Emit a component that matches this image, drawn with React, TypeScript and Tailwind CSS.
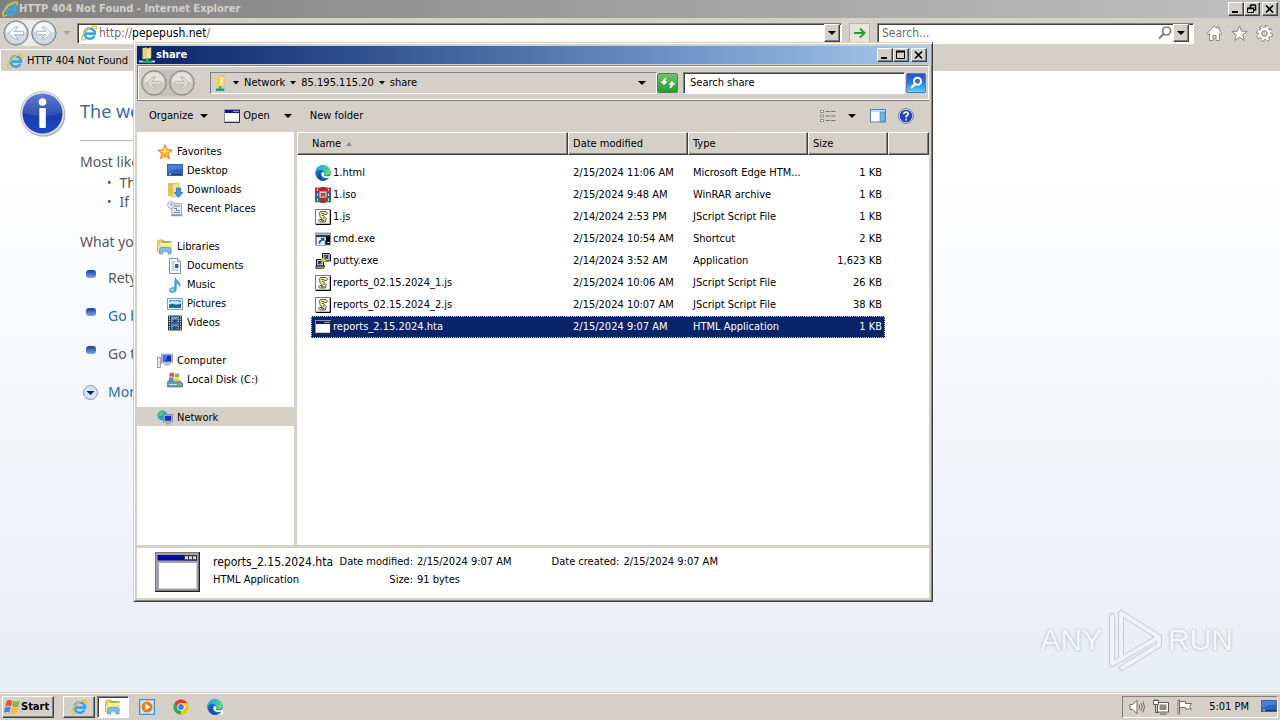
import type { ReactNode } from "react";

const RAISED =
  "border border-t-white border-l-white border-r-[#404040] border-b-[#404040] bg-[#d4d0c8] shadow-[inset_-1px_-1px_0_#808080]";
const SUNKEN =
  "border border-t-[#808080] border-l-[#808080] border-r-white border-b-white bg-white shadow-[inset_1px_1px_0_#404040]";

type IconProps = { className?: string };

/* ---------- icons ---------- */

function IeIcon({ className = "h-4 w-4" }: IconProps) {
  return (
    <svg className={`shrink-0 ${className}`} viewBox="0 0 16 16" aria-hidden>
      <path d="M13.4 10.8A5.200 5.200 0 1 1 13.900 8.600H4.600" fill="none" stroke="#3aa5e4" strokeWidth="2.600" />
      <path d="M4 6.200Q5.500 3.800 8.500 3.800" fill="none" stroke="#9bdcfa" strokeWidth="1" />
      <path
        d="M1.200 14.600C-.4 12.400 3 6.600 8.400 3.200 11.600 1.200 15 .4 15.400 2c.2.800-.1 1.800-.6 2.600"
        fill="none"
        stroke="#efc12c"
        strokeWidth="1.500"
      />
      <path d="M1.200 14.600c1 .8 2.600.2 4-.6" fill="none" stroke="#efc12c" strokeWidth="1.300" />
    </svg>
  );
}

function EdgeIcon({ className = "h-4 w-4" }: IconProps) {
  return (
    <svg className={`shrink-0 ${className}`} viewBox="0 0 16 16" aria-hidden>
      <defs>
        <linearGradient id="edgeTop" x1="0" y1="0" x2="1" y2="0.4">
          <stop offset="0" stopColor="#1f9fe0" />
          <stop offset="0.6" stopColor="#2fc3c0" />
          <stop offset="1" stopColor="#6bdc5a" />
        </linearGradient>
      </defs>
      <circle cx="8" cy="8" r="7.700" fill="#1668bd" />
      <path d="M.3 8C.6 3.400 4 .3 8 .3c4.500 0 7.700 3 7.700 6.500 0 2.200-1.800 3.700-4 3.700-1.700 0-2.700-.7-2.400-1.400.4-.8.500-2.800-1.800-3.700C4.800 4.400 1.200 5.500.3 8z" fill="url(#edgeTop)" />
      <path d="M5.200 9.200c-.2 3.200 2.500 6 5.800 6.100a7.500 7.500 0 0 1-5.700-.1C2.900 14 2.400 11 5.200 6.500z" fill="#1247a0" />
      <path d="M7.200 7.200c-1.400 1-1.300 4.800 2.800 5.700 2.500.5 4.200-.4 5-1l-1 2-1.200 1.300 3.200 0V10c-2 1.500-6.200 1.600-6.900.3-.3-.6.600-1.300.1-2.300-.4-.8-1.300-1.200-2-.8z" fill="#fff" />
    </svg>
  );
}

function ChromeIcon() {
  return (
    <svg className="h-4 w-4 shrink-0" viewBox="0 0 16 16" aria-hidden>
      <circle cx="8" cy="8" r="7.500" fill="#fbc116" />
      <path d="M1.500 4.200A7.500 7.500 0 0 1 14.500 4.300H8L4.800 9.800z" fill="#e33b2e" />
      <path d="M1.500 4.200 4.700 9.800 8 11.600l-.2 3.900A7.500 7.500 0 0 1 1.500 4.200z" fill="#2da94f" />
      <path d="M7.800 15.500 11.200 9.800 8 4.300h6.500A7.500 7.500 0 0 1 7.800 15.500z" fill="#fbc116" />
      <circle cx="8" cy="8" r="3.700" fill="#fff" />
      <circle cx="8" cy="8" r="2.900" fill="#3b7ded" />
    </svg>
  );
}

function MediaIcon() {
  return (
    <svg className="h-4 w-4 shrink-0" viewBox="0 0 16 16" aria-hidden>
      <rect x="0.5" y="0.5" width="15" height="15" fill="#a6cdf0" stroke="#4e8ec8" />
      <rect x="2" y="2" width="12" height="12" fill="#d8ecfb" />
      <circle cx="8" cy="8" r="5.500" fill="#f07c12" />
      <path d="M6.300 4.700v6.600L11.500 8z" fill="#fff" />
    </svg>
  );
}

function ExplorerIcon({ className = "h-4 w-4" }: IconProps) {
  return (
    <svg className={`shrink-0 ${className}`} viewBox="0 0 16 16" aria-hidden>
      <path d="M.5 2.500 2 1h4l1 1.500h7.500V13H.5z" fill="#f0cf62" stroke="#c99f3b" strokeWidth=".7" />
      <path d="M3 4h12v8H3z" fill="#fbeea7" />
      <path d="M5 3h7" stroke="#59b64b" strokeWidth="1.200" />
      <path d="M1 6.500h14V13H1z" fill="#f8e28a" />
      <path d="M2.500 15V10.500Q2.500 8.500 5 8.500h6.500q2.500 0 2.500 2V15h-3v-3H5.500v3z" fill="#7fc1ea" stroke="#4a8fc2" strokeWidth=".7" />
    </svg>
  );
}

function NetFolderIcon() {
  return (
    <svg className="h-4 w-4 shrink-0" viewBox="0 0 16 16" aria-hidden>
      <path d="M3.500 1 8 .5V12H3.500z" fill="#f3d470" />
      <path d="M7 2l5-1.500V11L7 12.500z" fill="#f9e79d" stroke="#d5a93d" strokeWidth=".6" />
      <path d="M7 11h2.500v4H7z" fill="#2fb673" />
      <path d="M4 13.500h8.500V16H4z" fill="#24a868" />
      <path d="M0 14.500h4M12.500 14.500H16" stroke="#a9dcf2" strokeWidth="2" />
    </svg>
  );
}

function StarIcon() {
  return (
    <svg className="h-4 w-4 shrink-0" viewBox="0 0 16 16" aria-hidden>
      <path d="M8 .8l2.100 4.800 5.200.5-3.900 3.500 1.100 5.200L8 12.200l-4.500 2.600 1.100-5.200L.7 6.100l5.200-.5z" fill="#fbb52f" stroke="#dd8424" strokeWidth=".9" />
      <path d="M8 2.700l1.300 3.700 3.700.4-3 1.200-4 .5-2.600-1.700 3.100-.4z" fill="#fee08a" />
    </svg>
  );
}

function DesktopIcon() {
  return (
    <svg className="h-4 w-4 shrink-0" viewBox="0 0 16 16" aria-hidden>
      <rect x="0.5" y="1.500" width="15" height="11" fill="#2a62bf" stroke="#47618f" />
      <path d="M1 2h14v4Q9 5 1 9z" fill="#4580d6" />
      <path d="M1 11.500h14" stroke="#17346e" />
      <path d="M2 10.500h2v1.500H2z" fill="#8fd6ff" />
    </svg>
  );
}

function DownloadsIcon() {
  return (
    <svg className="h-4 w-4 shrink-0" viewBox="0 0 16 16" aria-hidden>
      <path d="M1 1h5v13H1z" fill="#e5bf57" />
      <path d="M5 2l7-1v13l-7 1.500z" fill="#f8df8a" stroke="#cfa545" strokeWidth=".6" />
      <path d="M9.500 6h4v4.500h2.300L11.500 15.500 7.200 10.500h2.300z" fill="#3b9ae5" stroke="#1d68b4" strokeWidth=".7" />
    </svg>
  );
}

function RecentIcon() {
  return (
    <svg className="h-4 w-4 shrink-0" viewBox="0 0 16 16" aria-hidden>
      <path d="M4 2.500h10.500v11H5z" fill="#e3e9ee" stroke="#8b98a5" strokeWidth=".8" />
      <path d="M7 5h6M7 7.500h2.500v2H13M7 11.500h6" fill="none" stroke="#6f88a3" strokeWidth="1.100" />
      <path d="M4 14.500h11.500" stroke="#8b98a5" strokeWidth="1.500" />
      <circle cx="4" cy="4" r="3.400" fill="#eef5fa" stroke="#8a9baa" strokeWidth=".8" />
      <path d="M4 2v2.200h1.600" fill="none" stroke="#3f5a78" strokeWidth=".8" />
    </svg>
  );
}

function DocumentsIcon() {
  return (
    <svg className="h-4 w-4 shrink-0" viewBox="0 0 16 16" aria-hidden>
      <path d="M2.500.5h8l3 3v12h-11z" fill="#fff" stroke="#7f8d9b" />
      <path d="M10.500.5v3h3" fill="#d7e2ec" stroke="#7f8d9b" strokeWidth=".8" />
      <path d="M4.500 4h4M4.500 6h3M4.500 8h3M4.500 10h3M4.500 12h7" stroke="#92a8bf" />
      <rect x="8" y="6" width="3.500" height="4" fill="#2e5fa8" />
    </svg>
  );
}

function MusicIcon() {
  return (
    <svg className="h-4 w-4 shrink-0" viewBox="0 0 16 16" aria-hidden>
      <path d="M8 .5C9 3.500 13.500 4 13 9.500 12 7 10.500 6.500 9.300 6.300V12q0 3.300-3.600 3.500-3.200 0-3.200-2.200c0-2 2.600-3.300 5.200-2.500z" fill="#49aee8" stroke="#2a7fc0" strokeWidth=".6" />
      <ellipse cx="5.200" cy="12.800" rx="1.700" ry="1.200" fill="#a5dcf8" />
    </svg>
  );
}

function PicturesIcon() {
  return (
    <svg className="h-4 w-4 shrink-0" viewBox="0 0 16 16" aria-hidden>
      <rect x="0.5" y="2.500" width="15" height="11" fill="#fff" stroke="#8b9dae" />
      <rect x="2" y="4" width="12" height="8" fill="#4aa3d8" />
      <path d="M2 6q4-2 12 0v2H2z" fill="#c3ebf7" />
      <path d="M2 9.500q3-3 5-1t7-1V12H2z" fill="#1d6b8f" />
    </svg>
  );
}

function VideosIcon() {
  return (
    <svg className="h-4 w-4 shrink-0" viewBox="0 0 16 16" aria-hidden>
      <rect x="1" y="0.5" width="14" height="15" fill="#22333f" />
      <path d="M2.500 1v14M13.500 1v14" stroke="#dfe8ee" strokeWidth="1.200" strokeDasharray="1.300 1.200" />
      <rect x="4" y="1.500" width="8" height="6" fill="#5ba7d8" />
      <rect x="4" y="8.500" width="8" height="6" fill="#4a93c8" />
      <path d="M5 6.500q2-3.500 4-1.500l2-1v2l-3 1.500zM5 13.500q2-3.500 4-1.500l2-1v2l-3 1.500z" fill="#2a4a66" />
      <path d="M9 3h2v2H9zM9 10h2v2H9z" fill="#b5603f" />
    </svg>
  );
}

function ComputerIcon() {
  return (
    <svg className="h-4 w-4 shrink-0" viewBox="0 0 16 16" aria-hidden>
      <rect x="0.5" y="4.500" width="3" height="10" fill="#dfe3e8" stroke="#8b929b" strokeWidth=".8" />
      <rect x="4.500" y="1" width="11" height="9" fill="#cfd6e2" stroke="#7f8796" strokeWidth=".7" />
      <rect x="5.800" y="2.200" width="8.500" height="6.500" fill="#1e2fc4" />
      <path d="M5.800 2.200h5L8 8.700H5.800z" fill="#4b6df0" />
      <path d="M8 10.500h4l1.500 2h-7z" fill="#b0b6c0" />
    </svg>
  );
}

function DiskIcon() {
  return (
    <svg className="h-4 w-4 shrink-0" viewBox="0 0 16 16" aria-hidden>
      <path d="M1 9h12l2.500 2v4H.5v-4z" fill="#6f9aa4" stroke="#4d646c" strokeWidth=".7" />
      <path d="M2 12.500h8" stroke="#c7dfe6" />
      <path d="M12 12.500h2" stroke="#49e05c" strokeWidth="1.400" />
      <path d="M2.500 1.300q2.500-1.500 4.500-.3V5Q5 4 2.500 5z" fill="#e8562a" />
      <path d="M7.700 1.200q2.500 1 4.500 0V5q-2 1.200-4.500 0z" fill="#83bd3a" />
      <path d="M2 5.800q2.500-1.200 4.500-.2V9.500H2z" fill="#3f8ddb" />
      <path d="M7.200 6q2.500 1 4.500 0v3.500H7.200z" fill="#f6c22f" />
    </svg>
  );
}

function NetworkIcon() {
  return (
    <svg className="h-4 w-4 shrink-0" viewBox="0 0 16 16" aria-hidden>
      <circle cx="5.500" cy="5.500" r="5" fill="#2b9fb8" />
      <path d="M2 3q3-2 5-1L5 5q-2 2-3.500 1zM5 9l3-2v3z" fill="#5fcf6a" />
      <rect x="6.500" y="4.500" width="9" height="7.500" fill="#ccd5e2" stroke="#6f7990" strokeWidth=".7" />
      <rect x="7.700" y="5.700" width="6.600" height="5.200" fill="#1a2fc8" />
      <path d="M9.500 12.500h3.500l1 2h-5.500z" fill="#9aa3b3" />
    </svg>
  );
}

function RarIcon() {
  return (
    <svg className="h-4 w-4 shrink-0" viewBox="0 0 16 16" aria-hidden>
      <path d="M0 .5h16v4.800H0z" fill="#c22f3c" />
      <path d="M0 5.300h16v5H0z" fill="#3c53b0" />
      <path d="M0 10.300h16v5H0z" fill="#23804a" />
      <path d="M2.500 1.500v13M13.500 1.500v13" stroke="#e9d9d2" strokeDasharray="2.500 2.500" />
      <path d="M0 5.300h16M0 10.300h16" stroke="#2c2340" strokeWidth=".6" />
      <path d="M5.500 0h5v16h-5z" fill="#b3242f" />
      <path d="M4.500 4.500h7v6h-7z" fill="#f2e9da" />
      <path d="M6.200 5.500v3.700h1V6.500h1.600v2.700h1V5.500" fill="none" stroke="#c7303b" strokeWidth="1.100" />
    </svg>
  );
}

function ScriptIcon() {
  return (
    <svg className="h-4 w-4 shrink-0" viewBox="0 0 16 16" aria-hidden>
      <rect x="0.5" y="0.5" width="14.500" height="14.500" fill="#fff" stroke="#777" />
      <path d="M15.500 1v14.500H1" fill="none" stroke="#000" />
      <path d="M5.500 2.500H11l1.500 1.500-1 1.500H9.500l-1 1.300 2.700 2.700-.7 3.500H4.500L3.500 11.500l1-1h3L5 7.500 4.500 4z" fill="#f0ee90" stroke="#333" strokeWidth=".8" />
      <path d="M6.500 4.500h2.500M7 6.500h1.500M8 9h1.500M6 11.700h3.500" stroke="#333" strokeWidth=".8" />
    </svg>
  );
}

function CmdIcon() {
  return (
    <svg className="h-4 w-4 shrink-0" viewBox="0 0 16 16" aria-hidden>
      <rect x="0.5" y="2" width="15" height="12" fill="#0b0b0b" stroke="#8f97a3" strokeWidth=".9" />
      <path d="M1 3.300h14" stroke="#aebbd0" strokeWidth="2" />
      <path d="M10.500 6v3.500M12.500 11.500h2" stroke="#fff" />
      <rect x="1.500" y="6" width="8.500" height="8.500" fill="#eef3fa" stroke="#7c93b8" strokeWidth=".7" />
      <path d="M3.500 12.500q0-3.500 3-4L5.500 7h3.700v3.500L8 9.500q-2.500.5-3 3.200z" fill="#1f4fa8" />
    </svg>
  );
}

function PuttyIcon() {
  return (
    <svg className="h-4 w-4 shrink-0" viewBox="0 0 16 16" aria-hidden>
      <path d="M7.500.5h6.500l1.500 1V8h-8z" fill="#b9bcc5" stroke="#111" />
      <rect x="9" y="2" width="4.200" height="3.800" fill="#27348f" />
      <path d="M1.500 6.500h7V13h-7z" fill="#c9ccd3" stroke="#111" />
      <rect x="3" y="8" width="4" height="3.200" fill="#27348f" />
      <path d="M1 13h9l-1.500 2.300H.8z" fill="#a8abb3" stroke="#111" strokeWidth=".8" />
      <path d="M12 2 5.500 6.500l2.500.8L4.500 11.500 11.500 7.500 8.800 6.300z" fill="#f7ea1d" stroke="#5f5a00" strokeWidth=".4" />
    </svg>
  );
}

function WindowIcon() {
  return (
    <svg className="h-4 w-4 shrink-0" viewBox="0 0 16 16" aria-hidden>
      <rect x="0.5" y="1.500" width="15" height="12.500" fill="#fff" stroke="#8f8f9b" />
      <path d="M1 3.500h14" stroke="#12128c" strokeWidth="3" />
      <path d="M9.500 3.300h1.200M11.500 3.300h1.200M13.300 3.300h1.200" stroke="#d4d4e8" strokeWidth="1.200" />
      <path d="M15.500 2v12.500H.5" fill="none" stroke="#222a44" />
    </svg>
  );
}

function LargeWindowIcon() {
  return (
    <svg className="h-10 w-[45px] shrink-0" viewBox="0 0 45 40" aria-hidden>
      <rect width="45" height="40" fill="#22222a" />
      <rect width="44" height="39" fill="#77777f" />
      <rect x="1" y="1" width="42" height="37" fill="#a2a2ab" />
      <rect x="2.500" y="3" width="39.500" height="5.500" fill="#0707a6" />
      <path d="M29 3h13v5.500H29z" fill="#33333b" />
      <path d="M30 5.800h3M34 5.800h3M38 5.800h3" stroke="#d8d8de" strokeWidth="3" />
      <rect x="4" y="11" width="37.500" height="25.500" fill="#fff" />
    </svg>
  );
}

function WindowsFlag() {
  return (
    <svg className="h-4 w-4 shrink-0" viewBox="0 0 16 16" aria-hidden>
      <path d="M2.800 1.800Q5.500.3 8.200 1.500L7 7.200Q4 6 1.300 7.500z" fill="#e5532a" />
      <path d="M9.200 2q3 1.300 6.500-.2l-1.400 5.600q-3 1.500-6.300.1z" fill="#7fb83a" />
      <path d="M1 8.400Q4 7 6.700 8.200L5.500 13.500Q3 12.300-.2 13.700z" fill="#3d87d8" />
      <path d="M7.800 8.600q3 1.400 6.200 0L12.700 14q-3 1.500-6.200.2z" fill="#f5bd2a" />
    </svg>
  );
}

function InfoIcon() {
  return (
    <svg className="h-[46px] w-[46px] shrink-0" viewBox="0 0 46 46" aria-hidden>
      <defs>
        <linearGradient id="infoFill" x1="0" y1="0" x2="0" y2="1">
          <stop offset="0" stopColor="#4a6cc9" />
          <stop offset="0.5" stopColor="#1d3aab" />
          <stop offset="1" stopColor="#1c49c4" />
        </linearGradient>
      </defs>
      <circle cx="23.500" cy="24" r="22" fill="#b9bdc6" />
      <circle cx="22.500" cy="22.500" r="22" fill="#dfe3ec" stroke="#9aa3b8" strokeWidth=".6" />
      <circle cx="22.500" cy="22.500" r="20" fill="url(#infoFill)" />
      <path d="M3 22a19.500 19.500 0 0 1 39 0q-19 6-39 0z" fill="#fff" opacity=".12" />
      <circle cx="22.500" cy="11" r="3.800" fill="#fff" />
      <rect x="19.300" y="17" width="6.500" height="20" rx="1" fill="#fff" />
    </svg>
  );
}

function RoundArrow({ left = false, muted = false }: { left?: boolean; muted?: boolean }) {
  return (
    <button type="button" aria-label={left ? "Back" : "Forward"} className="shrink-0">
      <svg className="h-[26px] w-[26px]" viewBox="0 0 26 26" aria-hidden>
        <circle cx="13" cy="13" r="12.200" fill={muted ? "#c3c0ba" : "#b9c0ca"} stroke={muted ? "#85837e" : "#77808c"} />
        <circle cx="13" cy="13" r="10.500" fill={muted ? "#cfccc6" : "#d3dae4"} />
        <path d="M3 12a10 10 0 0 1 20 0q-10 4-20 0z" fill="#fff" opacity={muted ? 0.45 : 0.8} />
        <g transform={left ? "" : "rotate(180 13 13)"}>
          <path
            d="M5.500 13 12 7h3l-4 4.300h9.500v3.400H11L15 19h-3z"
            fill={muted ? "#dcdad5" : "#fff"}
            stroke={muted ? "#b3b0a9" : "#98a2b2"}
            strokeWidth=".8"
          />
        </g>
      </svg>
    </button>
  );
}

function Caret({ className = "text-black" }: IconProps) {
  return (
    <svg className={`h-1 w-2 shrink-0 ${className}`} viewBox="0 0 8 4" aria-hidden>
      <path d="M0 0h8L4 4z" fill="currentColor" />
    </svg>
  );
}

function SmallCaret() {
  return (
    <svg className="h-1 w-1.5 shrink-0" viewBox="0 0 6 4" aria-hidden>
      <path d="M0 0h6L3 3.500z" fill="#000" />
    </svg>
  );
}

/* ---------- window chrome ---------- */

function CaptionButton({ label, children }: { label: string; children: ReactNode }) {
  return (
    <button type="button" aria-label={label} className={`flex h-3.5 w-4 items-center justify-center ${RAISED}`}>
      <svg className="h-2.5 w-3" viewBox="0 0 12 10" fill="none" stroke="#000" aria-hidden>
        {children}
      </svg>
    </button>
  );
}

function CaptionButtons({ restored = false }: { restored?: boolean }) {
  return (
    <div className="flex gap-0.5">
      <div className="flex">
        <CaptionButton label="Minimize">
          <path d="M2 8h6" strokeWidth="2" />
        </CaptionButton>
        {restored ? (
          <CaptionButton label="Restore">
            <path d="M4 1h6M4.500 1v3M9.500 1v5H8" strokeWidth="1.500" />
            <path d="M1.500 4h6v4.500h-6z" />
            <path d="M1 4.500h7" strokeWidth="1.500" />
          </CaptionButton>
        ) : (
          <CaptionButton label="Maximize">
            <path d="M1.500 1.500h8v7h-8z" />
            <path d="M1 1.500h9" strokeWidth="2" />
          </CaptionButton>
        )}
      </div>
      <CaptionButton label="Close">
        <path d="M2 1.500l7 7M9 1.500l-7 7" strokeWidth="1.600" />
      </CaptionButton>
    </div>
  );
}

/* ---------- browser ---------- */

function BrowserToolbar() {
  return (
    <div className="flex h-[26px] items-center pl-[3px] pt-1">
      <div className="flex gap-0.5 rounded-full bg-[#eceae6]">
        <RoundArrow left />
        <RoundArrow />
      </div>
      <button type="button" aria-label="Recent pages" className="mx-1.5">
        <Caret className="text-[#a8a49c]" />
      </button>
      <div className={`flex h-[21px] min-w-0 flex-1 items-center pl-[3px] pr-px ${SUNKEN}`}>
        <IeIcon />
        <label className="ml-0.5 flex flex-1 items-center text-xs text-[#6d6d6d]">
          http://
          <input
            aria-label="Address"
            defaultValue="pepepush.net"
            className="text-black outline-none [field-sizing:content]"
          />
          /
        </label>
        <button type="button" aria-label="Show address list" className={`flex h-[18px] w-4 items-center justify-center ${RAISED}`}>
          <Caret />
        </button>
      </div>
      <button type="button" aria-label="Go" className="mx-[7px] flex h-5 w-[21px] items-center justify-center border border-[#b8b4ac] bg-[#e6e4df]">
        <svg className="h-3 w-3" viewBox="0 0 12 12" fill="none" stroke="#2f9a26" strokeWidth="2" aria-hidden>
          <path d="M0 6h10M6 1.500 10.500 6 6 10.500" />
        </svg>
      </button>
      <div className={`flex h-[21px] w-[317px] items-center pl-1 pr-1 ${SUNKEN}`}>
        <input
          type="text"
          aria-label="Search the web"
          placeholder="Search..."
          className="min-w-0 flex-1 text-xs outline-none placeholder:text-[#6d6d6d]"
        />
        <svg className="h-4 w-4" viewBox="0 0 16 16" fill="none" stroke="#808080" aria-hidden>
          <circle cx="9.500" cy="6" r="4" strokeWidth="1.700" />
          <path d="M6.500 9 2 13.500" strokeWidth="2.200" />
        </svg>
        <button type="button" aria-label="Search providers" className={`flex h-[18px] w-4 items-center justify-center ${RAISED}`}>
          <Caret />
        </button>
      </div>
      <div className="ml-3 mr-[7px] flex gap-2">
        <button type="button" aria-label="Home">
          <svg className="h-[17px] w-[17px]" viewBox="0 0 17 17" fill="#fff" stroke="#8b8880" aria-hidden>
            <path d="M8.500 1 1 8.500l1.200 1L3.500 8.500V15.500h3.500V10.500h3v5h3.500V8.500l1.300 1 1.200-1L13 5V2h-2v1.500z" />
          </svg>
        </button>
        <button type="button" aria-label="Favorites">
          <svg className="h-[17px] w-[17px]" viewBox="0 0 17 17" fill="#fff" stroke="#8b8880" aria-hidden>
            <path d="M8.500.8l2 5.400 5.700.2-4.500 3.500 1.600 5.600-4.800-3.300-4.800 3.300 1.600-5.600L.8 6.400l5.700-.2z" />
          </svg>
        </button>
        <button type="button" aria-label="Tools">
          <svg className="h-[17px] w-[17px]" viewBox="0 0 17 17" aria-hidden>
            <circle cx="8.500" cy="8.500" r="6.800" fill="none" stroke="#8b8880" strokeWidth="3.200" strokeDasharray="3.100 2.240" />
            <circle cx="8.500" cy="8.500" r="4.600" fill="none" stroke="#8b8880" strokeWidth="4" />
            <circle cx="8.500" cy="8.500" r="6.300" fill="none" stroke="#fff" strokeWidth="2.200" strokeDasharray="2.300 2.648" strokeDashoffset="-.4" />
            <circle cx="8.500" cy="8.500" r="4.400" fill="none" stroke="#fff" strokeWidth="2.600" />
            <circle cx="8.500" cy="8.500" r="2.600" fill="#d4d0c8" stroke="#8b8880" strokeWidth=".8" />
          </svg>
        </button>
      </div>
    </div>
  );
}

const TIPS = [{ text: "Rety" }, { text: "Go b", link: true }, { text: "Go t" }];

function ErrorPage() {
  return (
    <main className="flex flex-1 bg-linear-to-b from-white from-15% to-[#e9edf4] pl-5 pt-5 font-['Noto_Sans',sans-serif] text-sm whitespace-nowrap text-[#575757]">
      <InfoIcon />
      <div className="ml-3.5 w-[600px] pt-1.5">
        <h1 className="border-b border-[#b5b5b5] pb-[15px] text-lg leading-7 text-[#4465a2]">The we</h1>
        <p className="mt-[11px] leading-5">Most like</p>
        <ul className="mt-px pl-[27px] leading-[19px]">
          <li className="flex gap-2"><span className="text-xs leading-[19px]">•</span>Th</li>
          <li className="flex gap-2"><span className="text-xs leading-[19px]">•</span>If y</li>
        </ul>
        <p className="mt-[21px] leading-5">What yo</p>
        <ul className="mt-[7px]">
          {TIPS.map((tip) => (
            <li key={tip.text} className="flex h-[38px] items-center gap-3 pl-1.5">
              <span className="mb-2 h-2 w-2.5 rounded-[3px] bg-linear-to-b from-[#1b3f9c] to-[#7ba6ea]" />
              {tip.link ? <a href="#back" className="text-[#2a6aa8]">{tip.text}</a> : tip.text}
            </li>
          ))}
          <li className="flex h-[38px] items-center gap-2.5 pl-[3px]">
            <svg className="h-[15px] w-[15px]" viewBox="0 0 15 15" aria-hidden>
              <circle cx="7.500" cy="7.500" r="7" fill="#d3e4f7" stroke="#8796ad" />
              <path d="M3.500 6h8l-4 4z" fill="#0c2250" />
            </svg>
            <a href="#more" className="text-[#2a6aa8]">Mor</a>
          </li>
        </ul>
      </div>
    </main>
  );
}

/* ---------- file explorer ---------- */

const NAV_GROUPS = [
  {
    title: "Favorites",
    icon: <StarIcon />,
    items: [
      { name: "Desktop", icon: <DesktopIcon /> },
      { name: "Downloads", icon: <DownloadsIcon /> },
      { name: "Recent Places", icon: <RecentIcon /> },
    ],
  },
  {
    title: "Libraries",
    icon: <ExplorerIcon />,
    items: [
      { name: "Documents", icon: <DocumentsIcon /> },
      { name: "Music", icon: <MusicIcon /> },
      { name: "Pictures", icon: <PicturesIcon /> },
      { name: "Videos", icon: <VideosIcon /> },
    ],
  },
  {
    title: "Computer",
    icon: <ComputerIcon />,
    items: [{ name: "Local Disk (C:)", icon: <DiskIcon /> }],
  },
  { title: "Network", icon: <NetworkIcon />, items: [], selected: true },
];

const FILES = [
  { name: "1.html", date: "2/15/2024 11:06 AM", type: "Microsoft Edge HTM...", size: "1 KB", icon: <EdgeIcon /> },
  { name: "1.iso", date: "2/15/2024 9:48 AM", type: "WinRAR archive", size: "1 KB", icon: <RarIcon /> },
  { name: "1.js", date: "2/14/2024 2:53 PM", type: "JScript Script File", size: "1 KB", icon: <ScriptIcon /> },
  { name: "cmd.exe", date: "2/15/2024 10:54 AM", type: "Shortcut", size: "2 KB", icon: <CmdIcon /> },
  { name: "putty.exe", date: "2/14/2024 3:52 AM", type: "Application", size: "1,623 KB", icon: <PuttyIcon /> },
  { name: "reports_02.15.2024_1.js", date: "2/15/2024 10:06 AM", type: "JScript Script File", size: "26 KB", icon: <ScriptIcon /> },
  { name: "reports_02.15.2024_2.js", date: "2/15/2024 10:07 AM", type: "JScript Script File", size: "38 KB", icon: <ScriptIcon /> },
  { name: "reports_2.15.2024.hta", date: "2/15/2024 9:07 AM", type: "HTML Application", size: "1 KB", icon: <WindowIcon />, selected: true },
];

function ExplorerAddress() {
  return (
    <div className="mt-px flex h-[35px] items-center border border-t-[#808080] border-l-[#808080] border-r-white border-b-white pl-[3px] shadow-[inset_1px_1px_0_#fff,0_1px_0_#808080]">
      <div className="flex gap-0.5 rounded-full bg-[#c4c1ba]">
        <RoundArrow left muted />
        <RoundArrow muted />
      </div>
      <nav
        aria-label="Path"
        className="ml-[15px] flex h-[22px] flex-1 items-center gap-[5px] border border-t-[#808080] border-l-[#808080] border-r-white border-b-white pl-px pr-2.5"
      >
        <NetFolderIcon />
        <SmallCaret />
        <a href="#network">Network</a>
        <SmallCaret />
        <a href="#host">85.195.115.20</a>
        <SmallCaret />
        <a href="#share">share</a>
        <button type="button" aria-label="Previous locations" className="ml-auto">
          <Caret />
        </button>
      </nav>
      <button type="button" aria-label="Refresh" className="flex h-5 w-[21px] items-center justify-center rounded-xs border border-[#5d7a5a] bg-linear-to-b from-[#6cc468] to-[#1f9a2c]">
        <svg className="h-3.5 w-4" viewBox="0 0 16 14" fill="#fff" aria-hidden>
          <path d="M4 9 .5 5.500H3Q3 2 7 1.500 5.500 3 5.500 5.500h2z" />
          <path d="M12 5l3.500 3.500H13q0 3.500-4 4 1.500-1.500 1.500-4h-2z" />
        </svg>
      </button>
      <input
        type="text"
        aria-label="Search share"
        placeholder="Search share"
        className={`ml-[5px] h-[22px] w-[222px] px-1.5 outline-none placeholder:text-black ${SUNKEN}`}
      />
      <button type="button" aria-label="Search" className="ml-px mr-0.5 flex h-5 w-5 items-center justify-center rounded-xs border border-[#5878b0] bg-linear-to-b from-[#2b4fc4] via-[#2d7be0] to-[#5fd4f0]">
        <svg className="h-4 w-4" viewBox="0 0 16 16" fill="none" stroke="#fff" aria-hidden>
          <circle cx="9.500" cy="6.300" r="3.500" strokeWidth="2" />
          <path d="M7 9 3 13" strokeWidth="2.400" />
        </svg>
      </button>
    </div>
  );
}

function ExplorerToolbar() {
  return (
    <div className="flex h-8 items-center pl-3 pr-[15px]">
      <button type="button" className="flex items-center gap-[7px]">
        Organize <Caret />
      </button>
      <button type="button" className="ml-4 flex items-center gap-[3px]">
        <WindowIcon /> Open
      </button>
      <button type="button" aria-label="Open with" className="ml-3.5">
        <Caret />
      </button>
      <button type="button" className="ml-[18px]">New folder</button>
      <div className="ml-auto flex items-center">
        <button type="button" aria-label="Change view">
          <svg className="h-3.5 w-4" viewBox="0 0 16 14" aria-hidden>
            <path d="M.5 1.500h3v2h-3zM.5 6h3v2h-3zM.5 10.500h3v2h-3z" fill="#fff" stroke="#70757e" strokeWidth=".8" />
            <path d="M5.500 2.500h10M5.500 7h10M5.500 11.500h10" stroke="#70757e" strokeDasharray="4.500 1" />
          </svg>
        </button>
        <button type="button" aria-label="More views" className="ml-3">
          <Caret />
        </button>
        <button type="button" aria-label="Preview pane" className="ml-3.5">
          <svg className="h-4 w-4" viewBox="0 0 16 16" aria-hidden>
            <rect x="0.5" y="1.500" width="15" height="12.500" fill="#fff" stroke="#5b7ea5" />
            <path d="M1 3h14" stroke="#c8dcf0" strokeWidth="2" />
            <rect x="10" y="4" width="5" height="9.500" fill="#63b6e0" stroke="#3b86b8" strokeWidth=".6" />
          </svg>
        </button>
        <button type="button" aria-label="Help" className="ml-3">
          <svg className="h-4 w-4" viewBox="0 0 16 16" aria-hidden>
            <circle cx="8" cy="8" r="7.500" fill="#e0e6f5" stroke="#62709a" strokeWidth=".8" />
            <circle cx="8" cy="8" r="6.300" fill="#2345b5" />
            <path d="M5.800 6.300Q5.900 4 8 4t2.200 1.900C10.200 7.500 8 7.500 8 9.500M8 10.800v1.700" fill="none" stroke="#fff" strokeWidth="1.600" />
          </svg>
        </button>
      </div>
    </div>
  );
}

function NavPane() {
  return (
    <aside className="flex w-[157px] shrink-0 flex-col gap-[19px] bg-white pt-[9px]">
      {NAV_GROUPS.map((group) => (
        <div key={group.title}>
          <a
            href={`#${group.title}`}
            className={`flex h-[19px] items-center gap-1 pl-5 pt-0.5 ${group.selected ? "bg-[#d4d0c8]" : ""}`}
          >
            {group.icon}
            {group.title}
          </a>
          {group.items.map((item) => (
            <a key={item.name} href={`#${item.name}`} className="flex h-[19px] items-center gap-1 pl-[30px] pt-0.5">
              {item.icon}
              {item.name}
            </a>
          ))}
        </div>
      ))}
    </aside>
  );
}

function FileTable() {
  const th = `h-[23px] p-0 pl-1 pt-px text-left font-normal ${RAISED}`;
  return (
    <div className="min-w-0 flex-1 bg-white">
      <table className="w-full table-fixed border-separate border-spacing-0">
        <colgroup>
          <col className="w-3.5" />
          <col className="w-[257px]" />
          <col className="w-[120px]" />
          <col className="w-[120px]" />
          <col className="w-[77px]" />
          <col className="w-[3px]" />
          <col />
        </colgroup>
        <thead>
          <tr>
            <th colSpan={2} className={th}>
              <span className="flex items-center gap-1 pl-2.5">
                Name
                <svg className="h-1 w-2" viewBox="0 0 8 4" aria-hidden>
                  <path d="M1 4h6L4 0z" fill="#8d8a84" />
                </svg>
              </span>
            </th>
            <th className={th}>Date modified</th>
            <th className={th}>Type</th>
            <th colSpan={2} className={th}>Size</th>
            <th className={th} aria-label="Empty" />
          </tr>
        </thead>
        <tbody className="before:block before:h-[7px]">
          {FILES.map((file) => {
            const tone = file.selected
              ? "bg-[#0a246a] text-white border-y border-dotted border-[#b9c0d6]"
              : "border-y border-transparent";
            return (
              <tr key={file.name} className="h-[22px] whitespace-nowrap">
                <td />
                <td className={`${tone} border-l p-0 pl-[3px]`}>
                  <span className="flex items-center gap-0.5">
                    {file.icon}
                    {file.name}
                  </span>
                </td>
                <td className={`${tone} p-0 pl-[5px]`}>{file.date}</td>
                <td className={`${tone} p-0 pl-[5px]`}>{file.type}</td>
                <td className={`${tone} border-r p-0 pr-0.5 text-right`}>{file.size}</td>
                <td />
                <td />
              </tr>
            );
          })}
        </tbody>
      </table>
    </div>
  );
}

function DetailsPane() {
  return (
    <footer className="mt-[3px] flex h-[50px] shrink-0 items-start whitespace-nowrap bg-white pl-[18px] pt-1">
      <LargeWindowIcon />
      <div className="ml-[13px] w-[126px] pt-px leading-[18px]">
        <p className="text-xs leading-[18px]">reports_2.15.2024.hta</p>
        <p>HTML Application</p>
      </div>
      <dl className="grid grid-cols-[74px_auto] gap-x-1 pt-px leading-[18px]">
        <dt className="text-right">Date modified:</dt>
        <dd>2/15/2024 9:07 AM</dd>
        <dt className="text-right">Size:</dt>
        <dd>91 bytes</dd>
      </dl>
      <dl className="ml-10 flex gap-1 pt-px leading-[18px]">
        <dt>Date created:</dt>
        <dd>2/15/2024 9:07 AM</dd>
      </dl>
    </footer>
  );
}

function ExplorerWindow() {
  return (
    <section
      aria-label="share"
      className="absolute left-[133px] top-[42px] flex h-[560px] w-[800px] flex-col border border-t-[#d4d0c8] border-l-[#d4d0c8] border-r-[#404040] border-b-[#404040] bg-[#d4d0c8] p-[3px] shadow-[inset_1px_1px_0_#fff,inset_-1px_-1px_0_#808080]"
    >
      <header className="flex h-[18px] shrink-0 items-center bg-linear-to-r from-[#0a246a] to-[#a6caf0] pl-0.5 pr-0.5 font-bold text-white">
        <NetFolderIcon />
        <h2 className="ml-px flex-1">share</h2>
        <CaptionButtons />
      </header>
      <ExplorerAddress />
      <ExplorerToolbar />
      <div className="flex min-h-0 flex-1 gap-[3px]">
        <NavPane />
        <FileTable />
      </div>
      <DetailsPane />
    </section>
  );
}

/* ---------- desktop ---------- */

function Watermark() {
  return (
    <div className="pointer-events-none absolute bottom-[48px] right-[47px] flex items-center gap-[5px] font-['Liberation_Sans',sans-serif] text-[30px] leading-none text-[#f6f7fa] [text-shadow:0_0_3px_#a9adb6]">
      <span>ANY</span>
      <svg className="h-16 w-14" viewBox="0 0 56 64" fill="none" strokeLinejoin="round" strokeLinecap="round" aria-hidden>
        <path d="M5 8v48M14 5v46l38-22zM14 5l38 24M5 56l9-5M15 60l37-23v-8" stroke="#c9ccd4" strokeWidth="6" />
        <path d="M5 8v48M14 5v46l38-22zM14 5l38 24M5 56l9-5M15 60l37-23v-8" stroke="#f1f2f6" strokeWidth="4" />
      </svg>
      <span>RUN</span>
    </div>
  );
}

function Taskbar() {
  return (
    <footer className="flex h-7 shrink-0 items-center border-t border-[#d4d0c8] bg-[#d4d0c8] px-0.5 pt-px shadow-[inset_0_1px_0_#fff]">
      <button type="button" className={`flex h-[22px] w-[52px] items-center gap-px pl-px text-[11px] font-bold ${RAISED}`}>
        <WindowsFlag />
        Start
      </button>
      <button type="button" aria-label="Internet Explorer" className={`ml-[9px] flex h-[22px] w-8 items-center justify-center ${RAISED}`}>
        <IeIcon />
      </button>
      <button type="button" aria-label="Windows Explorer" className={`ml-0.5 flex h-[22px] w-8 items-center justify-center ${SUNKEN}`}>
        <ExplorerIcon />
      </button>
      <div className="ml-2.5 flex gap-[18px]">
        <button type="button" aria-label="Media Player"><MediaIcon /></button>
        <button type="button" aria-label="Chrome"><ChromeIcon /></button>
        <button type="button" aria-label="Edge"><EdgeIcon /></button>
      </div>
      <div className="ml-auto flex h-[22px] items-center border border-t-[#808080] border-l-[#808080] border-r-white border-b-white pl-1.5">
        <div className="flex gap-2">
          <svg className="h-4 w-4" viewBox="0 0 16 16" fill="none" stroke="#6f6c66" aria-hidden>
            <path d="M1 5.500h2.500L8 1.500v13l-4.500-4H1z" fill="#fff" />
            <path d="M10 5.500q1.500 2.500 0 5M12 4q2.500 4 0 8M14 2.500q3 5.500 0 11" />
          </svg>
          <svg className="h-4 w-4" viewBox="0 0 16 16" fill="none" stroke="#5d5a55" aria-hidden>
            <rect x="4.500" y="3.500" width="11" height="9.500" fill="#fff" />
            <rect x="6.500" y="5.500" width="7" height="5.500" fill="#8b8983" stroke="none" />
            <path d="M7 15h7M2.500 6v7.500h3" />
            <path d="M.5 1.500h5v4h-5zM2 0v2M4 0v2" fill="#fff" />
          </svg>
          <svg className="h-4 w-4" viewBox="0 0 16 16" fill="#fff" stroke="#6f6c66" aria-hidden>
            <path d="M1 1h1.500v14H1z" />
            <path d="M2.500 2.500h6v2h6l-2 3 2 2.500h-6V8.500h-6z" />
          </svg>
        </div>
        <time className="ml-4 mr-3">5:01 PM</time>
        <DesktopIcon />
      </div>
    </footer>
  );
}

export default function App() {
  return (
    <div className="relative flex h-screen min-h-[620px] flex-col overflow-hidden bg-[#d4d0c8] font-['DejaVu_Sans_Condensed','DejaVu_Sans',sans-serif] text-[11px] leading-4 text-black">
      <header className="flex h-[18px] shrink-0 items-center bg-linear-to-r from-[#808080] to-[#c0c0c0] pl-0.5 pr-0.5 font-bold text-[#d4d0c8]">
        <IeIcon />
        <h1 className="ml-px flex-1">HTTP 404 Not Found - Internet Explorer</h1>
        <CaptionButtons restored />
      </header>
      <BrowserToolbar />
      <div className="flex h-[27px] shrink-0 items-end">
        <a href="#tab" className="flex h-[22px] w-[240px] items-center gap-1 border-l border-t border-white pl-1.5">
          <IeIcon />
          HTTP 404 Not Found
        </a>
      </div>
      <ErrorPage />
      <Watermark />
      <Taskbar />
      <ExplorerWindow />
    </div>
  );
}
